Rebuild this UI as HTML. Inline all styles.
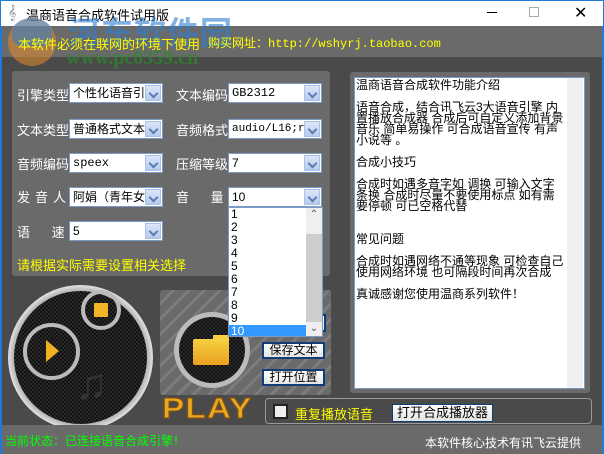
<!DOCTYPE html><html><head><meta charset="utf-8"><style>
*{margin:0;padding:0;box-sizing:border-box}
body{width:604px;height:454px;overflow:hidden;background:#4b4a4a;font-family:"Liberation Sans","Noto Sans CJK SC",sans-serif;font-size:13px;position:relative}
.a{position:absolute}
.cb{position:absolute;height:20px;background:#fff;border:1px solid #7a9cc4;font-size:12px;line-height:18px;padding-left:3px;color:#000;white-space:nowrap;overflow:hidden}
.cb i{position:absolute;right:1px;top:1px;width:16px;height:16px;background:linear-gradient(#dbe6f8,#b7cbee);border:1px solid #aac0e6}
.cb i:after{content:"";position:absolute;left:4px;top:4px;width:5px;height:5px;border-right:2px solid #5a7db0;border-bottom:2px solid #5a7db0;transform:rotate(45deg)}
.lb{position:absolute;color:#fff;font-size:13px}
.btn{position:absolute;background:linear-gradient(#fff,#e4e4e4);border:2px solid #0f3d78;font-size:12px;text-align:center;line-height:13px;color:#000}
.mono{font-family:"Liberation Mono","Noto Sans CJK SC",monospace}
</style></head><body>
<div class="a" style="left:0;top:0;width:604px;height:26px;background:#fff;border:1px solid #1e7bd6;border-bottom:none"></div>
<div class="a" style="left:26px;top:5px;font-size:13px;color:#000">温商语音合成软件试用版</div>
<div class="a" style="left:8px;top:4px;color:#888;font-size:14px">𝄞</div>
<div class="a" style="left:487px;top:12px;width:10px;height:1px;background:#000"></div>
<div class="a" style="left:529px;top:7px;width:10px;height:10px;border:1px solid #aaa"></div>
<div class="a" style="left:574px;top:3px;font-size:16px;color:#000">✕</div>
<div class="a" style="left:0;top:26px;width:604px;height:31px;background:#6b6a6a"></div>
<div class="a" style="left:0;top:26px;width:2px;height:428px;background:#1e7bd6"></div>
<div class="a" style="left:602px;top:26px;width:2px;height:428px;background:#1e7bd6"></div>
<div class="a" style="left:8px;top:18px;width:48px;height:48px;border-radius:50%;background:#e58a2c;opacity:.55"></div>
<div class="a" style="left:12px;top:18px;width:40px;height:28px;border-radius:50% 50% 10px 10px;background:#2d7fd0;opacity:.55"></div>
<div class="a" style="left:68px;top:8px;font-size:32px;font-weight:bold;color:#2d7fd0;opacity:.6;letter-spacing:1px">河东软件园</div>
<div class="a" style="left:66px;top:47px;font-size:20px;font-weight:bold;color:#2a8a2a;opacity:.7;font-family:'Liberation Serif',serif">www.pc0359.cn</div>
<div class="a" style="left:18px;top:34px;color:#ffff00;font-size:13px">本软件必须在联网的环境下使用</div>
<div class="a mono" style="left:208px;top:34px;color:#ffff00;font-size:12px">购买网址：http://wshyrj.taobao.com</div>

<div class="a" style="left:12px;top:71px;width:318px;height:205px;background:#6b6a6a;border-radius:3px"></div>
<div class="lb" style="left:17px;top:85px">引擎类型</div>
<div class="cb" style="left:69px;top:83px;width:94px">个性化语音引<i></i></div>
<div class="lb" style="left:176px;top:85px">文本编码</div>
<div class="cb mono" style="left:228px;top:83px;width:94px">GB2312<i></i></div>
<div class="lb" style="left:17px;top:120px">文本类型</div>
<div class="cb" style="left:69px;top:119px;width:94px">普通格式文本<i></i></div>
<div class="lb" style="left:176px;top:120px">音频格式</div>
<div class="cb mono" style="left:228px;top:119px;width:94px;font-size:11px">audio/L16;ra<i></i></div>
<div class="lb" style="left:17px;top:154px">音频编码</div>
<div class="cb mono" style="left:69px;top:153px;width:94px">speex<i></i></div>
<div class="lb" style="left:176px;top:154px">压缩等级</div>
<div class="cb" style="left:228px;top:153px;width:94px">7<i></i></div>
<div class="lb" style="left:17px;top:187px;letter-spacing:5px">发音人</div>
<div class="cb" style="left:69px;top:187px;width:94px">阿娟（青年女<i></i></div>
<div class="lb" style="left:176px;top:187px">音&nbsp;&nbsp;&nbsp;&nbsp;&nbsp;&nbsp;量</div>
<div class="cb" style="left:228px;top:187px;width:94px">10<i></i></div>
<div class="lb" style="left:17px;top:222px">语&nbsp;&nbsp;&nbsp;&nbsp;&nbsp;&nbsp;速</div>
<div class="cb" style="left:69px;top:221px;width:94px">5<i></i></div>
<div class="a" style="left:17px;top:255px;color:#ffff00;font-size:13px">请根据实际需要设置相关选择</div>

<div class="a" style="left:8px;top:285px;width:145px;height:145px;border-radius:50%;background:radial-gradient(circle,#888 60%,#ddd 70%,#999 100%);"></div>
<div class="a" style="left:14px;top:291px;width:133px;height:133px;border-radius:50%;background:repeating-conic-gradient(#111 0 25%,#2a2a2a 0 50%) 0 0/4px 4px"></div>
<div class="a" style="left:23px;top:323px;width:57px;height:57px;border-radius:50%;border:4px solid #bbb"></div>
<div class="a" style="left:46px;top:340px;width:0;height:0;border-left:13px solid #f0b020;border-top:11px solid transparent;border-bottom:11px solid transparent"></div>
<div class="a" style="left:81px;top:290px;width:40px;height:40px;border-radius:50%;border:4px solid #bbb"></div>
<div class="a" style="left:94px;top:303px;width:14px;height:14px;background:#f2b526"></div>
<div class="a" style="left:75px;top:360px;font-size:44px;color:#333">♫</div>

<div class="a" style="left:160px;top:290px;width:171px;height:105px;background:repeating-linear-gradient(-45deg,#6a6a6a 0 8px,#7c7c7c 8px 11px);border-radius:3px"></div>
<div class="a" style="left:174px;top:312px;width:76px;height:76px;border-radius:50%;background:#bbb"></div>
<div class="a" style="left:179px;top:317px;width:66px;height:66px;border-radius:50%;background:repeating-conic-gradient(#111 0 25%,#2a2a2a 0 50%) 0 0/4px 4px"></div>
<div class="a" style="left:193px;top:339px;width:36px;height:26px;background:linear-gradient(#f5d040,#eaa020);border-radius:2px"></div>
<div class="a" style="left:213px;top:335px;width:16px;height:6px;background:#f5d040"></div>
<div class="btn" style="left:300px;top:314px;width:26px;height:18px"></div>
<div class="btn" style="left:262px;top:342px;width:63px;height:17px">保存文本</div>
<div class="btn" style="left:262px;top:369px;width:63px;height:17px">打开位置</div>

<div class="cb" style="left:228px;top:207px;width:95px;height:130px;padding:0;font-size:12px;line-height:13px;border-color:#7a9cc4">
<div style="padding-left:2px">1<br>2<br>3<br>4<br>5<br>6<br>7<br>8<br>9</div>
<div style="background:#3399ff;color:#fff;padding-left:2px;width:77px">10</div>
<div class="a" style="right:0;top:0;width:16px;height:128px;background:#cdcdcd"></div>
<div class="a" style="right:0;top:0;width:16px;height:26px;background:#efefef;color:#555;text-align:center;font-size:10px">⌃</div>
<div class="a" style="right:0;bottom:0;width:16px;height:14px;background:#efefef;color:#555;text-align:center;font-size:10px">⌄</div>
</div>

<div class="a" style="left:162px;top:393px;font-size:29px;font-weight:900;color:#e8a820;font-family:'Liberation Sans',sans-serif;letter-spacing:1px;-webkit-text-stroke:1px #8a5010;transform:scaleX(1.15);transform-origin:left">PLAY</div>
<div class="a" style="left:265px;top:398px;width:327px;height:26px;border:1px solid #999;border-radius:4px"></div>
<div class="a" style="left:273px;top:404px;width:15px;height:15px;background:#eee;border:2px solid #222"></div>
<div class="a" style="left:295px;top:404px;color:#ffff00;font-size:13px">重复播放语音</div>
<div class="btn" style="left:392px;top:404px;width:101px;height:18px;border-width:1px;line-height:16px;font-size:13px">打开合成播放器</div>

<div class="a" style="left:350px;top:72px;width:240px;height:321px;background:#6b6a6a;border-radius:3px"></div>
<div class="a" style="left:354px;top:77px;width:231px;height:312px;background:#fff;border:1px solid #7a9cc4"></div>
<div class="a" style="left:567px;top:78px;width:16px;height:310px;background:#f0f0f0"></div>
<div class="a" style="left:356px;top:80px;width:210px;font-size:12px;line-height:11px;color:#000">温商语音合成软件功能介绍<br><br>语音合成，结合讯飞云3大语音引擎 内置播放合成器 合成后可自定义添加背景音乐 简单易操作 可合成语音宣传 有声小说等 。<br><br>合成小技巧<br><br>合成时如遇多音字如 调换 可输入文字 条换 合成时尽量不要使用标点 如有需要停顿 可已空格代替<br><br><br>常见问题<br><br>合成时如遇网络不通等现象 可检查自己使用网络环境 也可隔段时间再次合成<br><br>真诚感谢您使用温商系列软件！</div>

<div class="a" style="left:2px;top:425px;width:600px;height:29px;background:#6b6a6a"></div>
<div class="a" style="left:5px;top:432px;color:#00ff00;font-size:12px">当前状态：已连接语音合成引擎！</div>
<div class="a" style="left:425px;top:434px;color:#fff;font-size:12px">本软件核心技术有讯飞云提供</div>
</body></html>
